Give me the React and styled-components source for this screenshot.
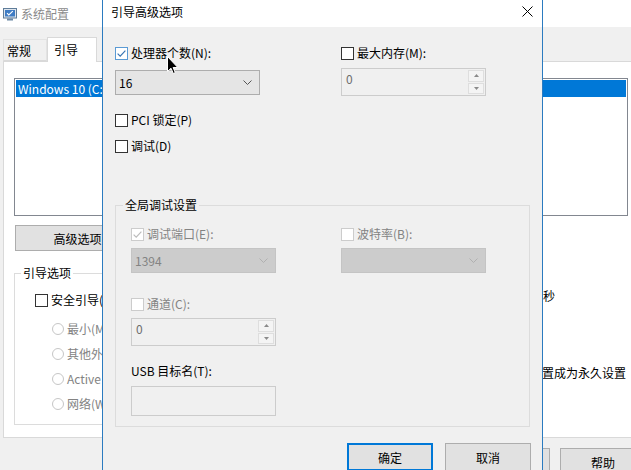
import React from "react";
import styled, { createGlobalStyle } from "styled-components";

const GlobalStyle = createGlobalStyle`
  html, body { margin: 0; padding: 0; }
  body {
    font-family: "Noto Sans CJK SC", "Noto Sans", sans-serif;
    font-size: 12px;
    color: #000;
    background: #f0f0f0;
  }
  * { box-sizing: border-box; }
`;

const Desktop = styled.div`
  position: relative;
  width: 631px;
  height: 470px;
  overflow: hidden;
  background: #f0f0f0;
`;

/* ---------- shared controls ---------- */

const CheckRow = styled.label`
  display: flex;
  align-items: center;
  gap: 3px;
  height: 16px;
  line-height: 16px;
  margin-top: ${(p) => p.$mt || 0}px;
  margin-left: ${(p) => p.$ml || 0}px;
  padding-left: ${(p) => p.$pl || 0}px;
  color: ${(p) => (p.$muted ? "#838383" : "#000")};
  white-space: nowrap;
`;

const Box = styled.span`
  width: 13px;
  height: 13px;
  flex: none;
  display: inline-flex;
  align-items: center;
  justify-content: center;
  background: #fff;
  border: 1px solid
    ${(p) => (p.$disabled ? "#cccccc" : p.$hot ? "#5a9ad4" : "#333333")};
`;

const Radio = styled.span`
  width: 12px;
  height: 12px;
  flex: none;
  border-radius: 50%;
  border: 1px solid #c6c6c6;
  background: #fff;
`;

function CheckBox({ checked, disabled, hot }) {
  const color = disabled ? "#bcbcbc" : hot ? "#3a76b3" : "#333";
  return (
    <Box $disabled={disabled} $hot={hot}>
      {checked && (
        <svg width="11" height="11" viewBox="0 0 11 11">
          <path d="M1.6 5.6 L4.2 8.2 L9.4 2.6" fill="none" stroke={color} strokeWidth="1.2" />
        </svg>
      )}
    </Box>
  );
}

const Select = styled.div`
  width: 145px;
  height: 25px;
  margin-top: ${(p) => p.$mt || 0}px;
  display: flex;
  align-items: center;
  justify-content: space-between;
  padding: 0 7px 0 3px;
  border: 1px solid ${(p) => (p.$disabled ? "#c4c4c4" : "#adadad")};
  background: ${(p) => (p.$disabled ? "#cccccc" : "#e5e5e5")};
  color: ${(p) => (p.$disabled ? "#838383" : "#000")};
  line-height: 16px;
`;

function Chevron({ disabled }) {
  return (
    <svg width="9" height="5" viewBox="0 0 9 5">
      <path d="M0.5 0.5 L4.5 4.5 L8.5 0.5" fill="none" stroke={disabled ? "#b0b0b0" : "#555"} strokeWidth="1" />
    </svg>
  );
}

const Spin = styled.div`
  width: 145px;
  height: 28px;
  margin-top: ${(p) => p.$mt || 0}px;
  display: flex;
  border: 1px solid #cccccc;
  background: #f0f0f0;
  color: #6d6d6d;
  line-height: 16px;
`;

const SpinValue = styled.span`
  flex: 1;
  padding: 2px 0 0 4px;
`;

const SpinButtons = styled.span`
  width: 17px;
  display: flex;
  flex-direction: column;
  gap: 1px;
  padding: 1px 1px 1px 0;
`;

const SpinButton = styled.span`
  flex: 1;
  display: flex;
  align-items: center;
  justify-content: center;
  border: 1px solid #dedede;
  background: #f4f4f4;
`;

function Arrow({ up }) {
  return (
    <svg width="5" height="3" viewBox="0 0 5 3">
      <path d={up ? "M0 3 L2.5 0 L5 3 Z" : "M0 0 L2.5 3 L5 0 Z"} fill="#8a8a8a" />
    </svg>
  );
}

function SpinBox({ value, mt }) {
  return (
    <Spin $mt={mt}>
      <SpinValue>{value}</SpinValue>
      <SpinButtons>
        <SpinButton><Arrow up /></SpinButton>
        <SpinButton><Arrow /></SpinButton>
      </SpinButtons>
    </Spin>
  );
}

const TextField = styled.div`
  width: 145px;
  height: 30px;
  margin-top: ${(p) => p.$mt || 0}px;
  border: 1px solid #cccccc;
  background: #f0f0f0;
`;

const Label = styled.div`
  height: 16px;
  line-height: 16px;
  margin-top: ${(p) => p.$mt || 0}px;
  white-space: nowrap;
`;

const Button = styled.button`
  width: ${(p) => p.$w || 86}px;
  height: ${(p) => p.$h || 28}px;
  margin-left: ${(p) => p.$ml || 0}px;
  padding: 0;
  font: inherit;
  color: #000;
  background: #e1e1e1;
  border: ${(p) => (p.$default ? "2px solid #0078d7" : "1px solid #adadad")};
  flex: none;
`;

const Group = styled.fieldset`
  margin: ${(p) => p.$mt || 0}px 0 0 0;
  min-inline-size: 0;
  width: ${(p) => p.$w}px;
  border: 1px solid #dcdcdc;
  padding: ${(p) => p.$pad};
`;

const Legend = styled.legend`
  margin-left: ${(p) => p.$ml}px;
  padding: 0 2px;
  line-height: 16px;
  height: 16px;
`;

const Stack = styled.div`
  display: flex;
  flex-direction: column;
  padding-left: ${(p) => p.$inset || 0}px;
`;

/* ---------- background window: 系统配置 ---------- */

const MainWindow = styled.div`
  position: absolute;
  left: 0;
  top: 0;
  width: 660px;
  height: 490px;
  display: flex;
  flex-direction: column;
  background: #f0f0f0;
`;

const MainTitle = styled.div`
  height: 27px;
  flex: none;
  display: flex;
  align-items: center;
  gap: 4px;
  padding-left: 3px;
  background: #fff;
  color: #8a8a8a;
`;

const TabStrip = styled.div`
  height: 34px;
  flex: none;
  display: flex;
  align-items: flex-end;
  padding-left: 3px;
`;

const Tab = styled.div`
  position: relative;
  z-index: 1;
  width: ${(p) => (p.$active ? 50 : 44)}px;
  height: ${(p) => (p.$active ? 25 : 22)}px;
  margin-bottom: ${(p) => (p.$active ? -1 : 0)}px;
  padding-left: ${(p) => (p.$active ? 6 : 3)}px;
  padding-bottom: ${(p) => (p.$active ? 2 : 0)}px;
  display: flex;
  align-items: center;
  border: 1px solid ${(p) => (p.$active ? "#d9d9d9" : "#e3e3e3")};
  border-bottom: ${(p) => (p.$active ? "none" : "1px solid #d9d9d9")};
  background: ${(p) => (p.$active ? "#fff" : "#f0f0f0")};
`;

const TabPanel = styled.div`
  height: 377px;
  flex: none;
  margin: 0 3px;
  padding: 16px 0 0 10px;
  border: 1px solid #d9d9d9;
  background: #fff;
`;

const ListBox = styled.div`
  width: 614px;
  height: 138px;
  padding: 1px;
  border: 1px solid #828790;
`;

const ListItem = styled.div`
  height: 17px;
  line-height: 17px;
  padding-left: 2px;
  background: ${(p) => (p.$selected ? "#0078d7" : "transparent")};
  color: ${(p) => (p.$selected ? "#fff" : "#000")};
  white-space: nowrap;
`;

const ButtonRow = styled.div`
  display: flex;
  margin-top: 9px;
`;

const LowerSection = styled.div`
  display: flex;
  margin-top: 14px;
`;

const SideColumn = styled.div`
  display: flex;
  flex-direction: column;
  margin-left: 47px;
  padding-top: 21px;
`;

const TimeoutRow = styled.div`
  display: flex;
  align-items: center;
  gap: 3px;
  height: 20px;
  line-height: 16px;
`;

const TimeoutLabel = styled.span`
  width: 72px;
`;

const TimeoutInput = styled.span`
  width: 44px;
  height: 20px;
  padding: 1px 4px;
  border: 1px solid #7a7a7a;
`;

const MainFooter = styled.div`
  flex: 1;
  display: flex;
  justify-content: flex-end;
  gap: 10px;
  padding: 10px 14px 0 0;
`;

function AppIcon() {
  return (
    <svg width="14" height="14" viewBox="0 0 14 14">
      <rect x="0.5" y="1.5" width="13" height="9.5" fill="#dfe6ee" stroke="#5f7c99" />
      <rect x="2" y="3" width="10" height="6.5" fill="#3f7cc4" />
      <path d="M4 6.2 L5.8 8 L9.8 4.2" fill="none" stroke="#fff" strokeWidth="1.1" />
      <rect x="4" y="11.5" width="6" height="2" fill="#6d89a6" />
    </svg>
  );
}

function MainWindowView() {
  return (
    <MainWindow>
      <MainTitle>
        <AppIcon />
        系统配置
      </MainTitle>
      <TabStrip>
        <Tab>常规</Tab>
        <Tab $active>引导</Tab>
      </TabStrip>
      <TabPanel>
        <ListBox>
          <ListItem $selected>Windows 10 (C:\Windows) : 当前 OS; 默认 OS</ListItem>
        </ListBox>
        <ButtonRow>
          <Button $w={150} $h={26} $ml={1}>高级选项(V)...</Button>
        </ButtonRow>
        <LowerSection>
          <Group $w={360} $pad="11px 0 12px 0">
            <Legend $ml={6}>引导选项</Legend>
            <Stack $inset={20}>
              <CheckRow>
                <CheckBox />
                安全引导(M)
              </CheckRow>
              <CheckRow $muted $ml={17} $mt={13}>
                <Radio />
                最小(M)
              </CheckRow>
              <CheckRow $muted $ml={17} $mt={9}>
                <Radio />
                其他外壳(L)
              </CheckRow>
              <CheckRow $muted $ml={17} $mt={9}>
                <Radio />
                Active Directory 修复(P)
              </CheckRow>
              <CheckRow $muted $ml={17} $mt={9}>
                <Radio />
                网络(W)
              </CheckRow>
            </Stack>
          </Group>
          <SideColumn>
            <TimeoutRow>
              <TimeoutLabel>超时(T):</TimeoutLabel>
              <TimeoutInput>30</TimeoutInput>
              <span>秒</span>
            </TimeoutRow>
            <CheckRow $mt={59} $pl={33}>
              <CheckBox />
              使所有引导设置成为永久设置
            </CheckRow>
          </SideColumn>
        </LowerSection>
      </TabPanel>
      <MainFooter>
        <Button $w={86}>确定</Button>
        <Button $w={86}>取消</Button>
        <Button $w={86}>应用(A)</Button>
        <Button $w={86}>帮助</Button>
      </MainFooter>
    </MainWindow>
  );
}

/* ---------- dialog: 引导高级选项 ---------- */

const Dialog = styled.div`
  position: absolute;
  left: 102px;
  top: -4px;
  width: 441px;
  height: 490px;
  display: flex;
  flex-direction: column;
  border: 1px solid #2b7bc0;
  background: #f0f0f0;
`;

const DialogTitle = styled.div`
  height: 30px;
  flex: none;
  display: flex;
  align-items: center;
  justify-content: space-between;
  padding-left: 8px;
  padding-bottom: 2px;
  background: #fff;
`;

const CloseButton = styled.span`
  width: 30px;
  height: 28px;
  display: flex;
  align-items: center;
  justify-content: center;
`;

const DialogBody = styled.div`
  padding: 18px 11px 0 12px;
`;

const TwoCols = styled.div`
  display: grid;
  grid-template-columns: ${(p) => p.$first}px 1fr;
  align-items: start;
  padding-left: ${(p) => p.$inset || 0}px;
`;

const DialogFooter = styled.div`
  display: flex;
  justify-content: flex-end;
  gap: 12px;
  margin-top: 16px;
`;

const Cursor = styled.svg`
  position: absolute;
  left: 167px;
  top: 56px;
`;

function DialogView() {
  return (
    <Dialog>
      <DialogTitle>
        引导高级选项
        <CloseButton>
          <svg width="11" height="11" viewBox="0 0 11 11">
            <path d="M0.5 0.5 L10.5 10.5 M10.5 0.5 L0.5 10.5" stroke="#000" strokeWidth="1" />
          </svg>
        </CloseButton>
      </DialogTitle>
      <DialogBody>
        <TwoCols $first={226}>
          <Stack>
            <CheckRow>
              <CheckBox checked hot />
              处理器个数(N):
            </CheckRow>
            <Select $mt={9}>
              16
              <Chevron />
            </Select>
            <CheckRow $mt={17}>
              <CheckBox />
              PCI 锁定(P)
            </CheckRow>
            <CheckRow $mt={10}>
              <CheckBox />
              调试(D)
            </CheckRow>
          </Stack>
          <Stack>
            <CheckRow>
              <CheckBox />
              最大内存(M):
            </CheckRow>
            <SpinBox value="0" mt={7} />
          </Stack>
        </TwoCols>

        <Group $w={415} $mt={43} $pad="13px 0 10px 0">
          <Legend $ml={7}>全局调试设置</Legend>
          <TwoCols $first={210} $inset={15}>
            <Stack>
              <CheckRow $muted>
                <CheckBox checked disabled />
                调试端口(E):
              </CheckRow>
              <Select $disabled $mt={6}>
                1394
                <Chevron disabled />
              </Select>
              <CheckRow $muted $mt={23}>
                <CheckBox disabled />
                通道(C):
              </CheckRow>
              <SpinBox value="0" mt={6} />
              <Label $mt={17}>USB 目标名(T):</Label>
              <TextField $mt={7} />
            </Stack>
            <Stack>
              <CheckRow $muted>
                <CheckBox disabled />
                波特率(B):
              </CheckRow>
              <Select $disabled $mt={6}>
                <span />
                <Chevron disabled />
              </Select>
            </Stack>
          </TwoCols>
        </Group>

        <DialogFooter>
          <Button $default>确定</Button>
          <Button>取消</Button>
        </DialogFooter>
      </DialogBody>
    </Dialog>
  );
}

export default function App() {
  return (
    <>
      <GlobalStyle />
      <Desktop>
        <MainWindowView />
        <DialogView />
        <Cursor width="12" height="19" viewBox="0 0 12 19">
          <path d="M0.5 0.5 L0.5 15.5 L4 12.2 L6.3 17.5 L8.3 16.6 L6.1 11.5 L10.8 11.5 Z" fill="#000" stroke="#fff" strokeWidth="1" />
        </Cursor>
      </Desktop>
    </>
  );
}
